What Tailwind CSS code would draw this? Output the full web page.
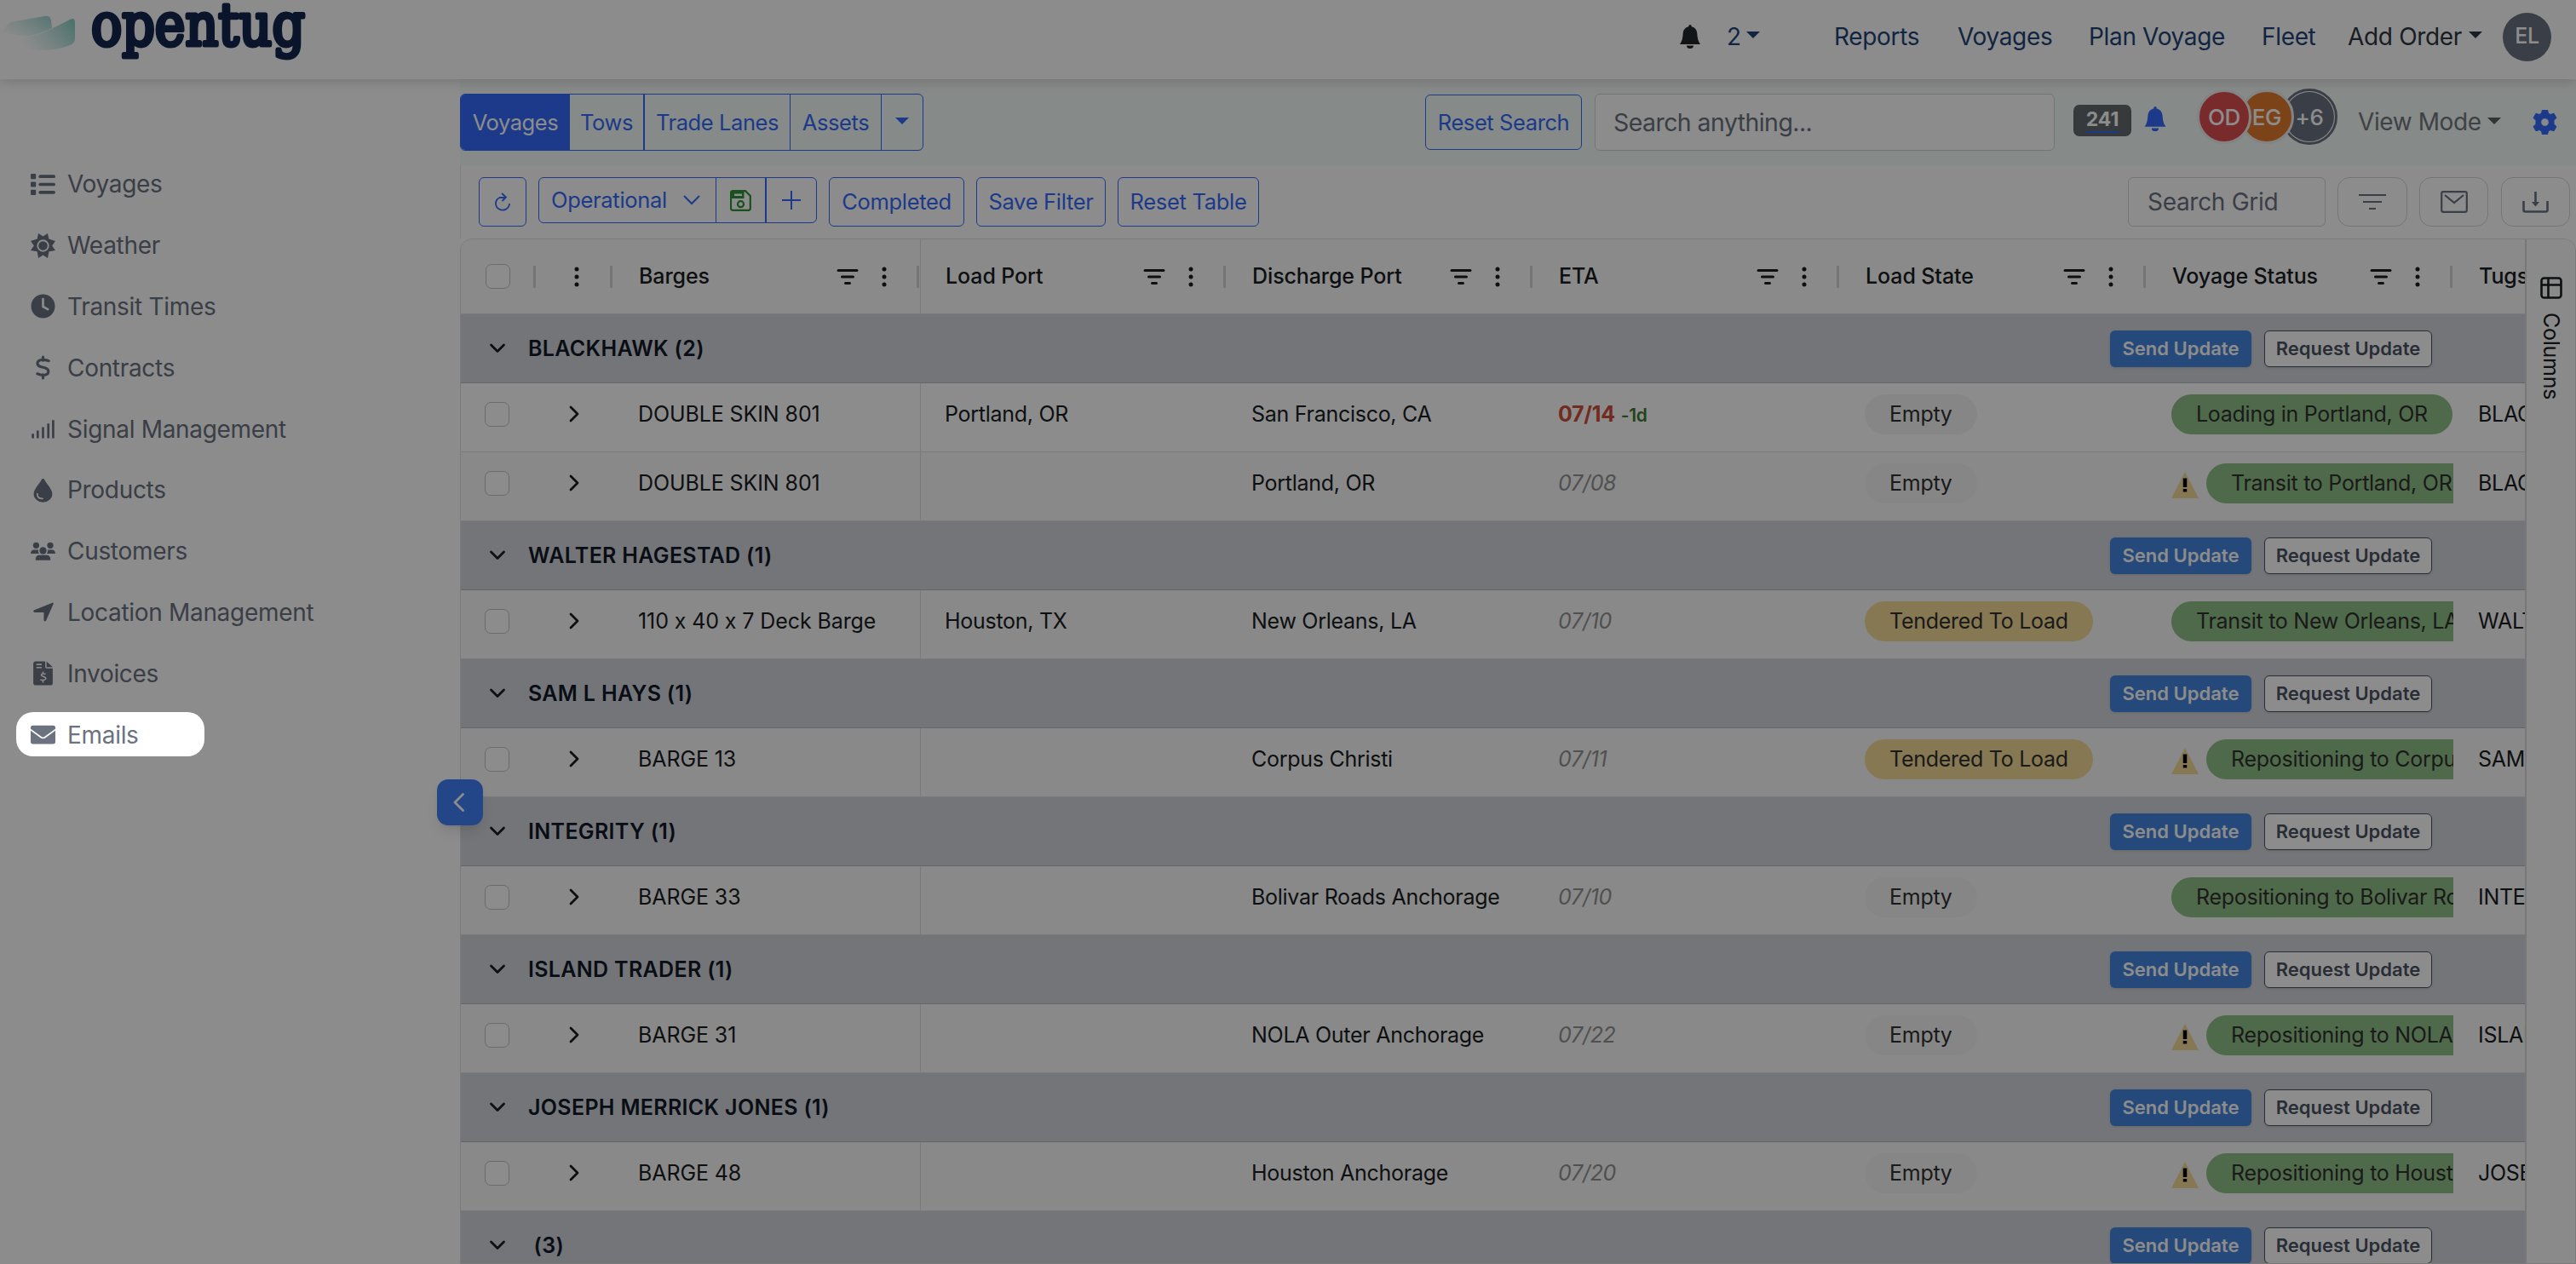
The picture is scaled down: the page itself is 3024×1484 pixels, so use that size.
<!DOCTYPE html>
<html lang="en">
<head>
  <meta charset="UTF-8">
  <meta name="viewport" content="width=device-width, initial-scale=1.0">
  <title>OpenTug - Voyages</title>
  <script src="https://cdn.jsdelivr.net/npm/@tailwindcss/browser@4"></script>
</head>
<body class="relative h-[1484px] w-[3024px] overflow-hidden bg-white font-['Inter','Liberation_Sans',sans-serif] text-[#181d1f] [font-feature-settings:'calt'_0]">

  <!-- icon sprite -->
  <svg class="hidden">
    <symbol id="filter" viewBox="0 0 26 20"><path d="M2 2.500h22M6.500 10h13M10.500 17.500h5" stroke="currentColor" stroke-width="3" stroke-linecap="round"/></symbol>
    <symbol id="dots" viewBox="0 0 6 24"><g fill="currentColor"><circle cx="3" cy="3" r="2.500"/><circle cx="3" cy="12" r="2.500"/><circle cx="3" cy="21" r="2.500"/></g></symbol>
    <symbol id="down" viewBox="0 0 20 12"><path d="M2.500 2l7.500 7.500L17.500 2" fill="none" stroke="currentColor" stroke-width="2.800" stroke-linecap="round" stroke-linejoin="round"/></symbol>
    <symbol id="right" viewBox="0 0 12 20"><path d="M2 2l8 8-8 8" fill="none" stroke="currentColor" stroke-width="2.800" stroke-linecap="round" stroke-linejoin="round"/></symbol>
    <symbol id="caret" viewBox="0 0 16 8"><path d="M0 0h16L8 8z" fill="currentColor"/></symbol>
    <symbol id="bell" viewBox="0 0 24 28"><path d="M12 0a1.700 1.700 0 0 1 1.700 1.700v.6C18 3.200 20 6.500 20.300 10.500c.4 5 .9 8.500 3.700 12.500H0c2.800-4 3.300-7.500 3.700-12.500C4 6.500 6 3.200 10.300 2.300v-.6A1.700 1.700 0 0 1 12 0zM8 24.500h8a4 3.500 0 0 1-8 0z" fill="currentColor"/></symbol>
    <symbol id="warn" viewBox="0 0 32 31"><path d="M16 0l16 31H0z" fill="#f4da95"/><path d="M16 7.500v10.500" stroke="#000" stroke-width="4.500"/><path d="M13.800 20h4.400v3.500h-4.400z" fill="#000"/></symbol>
  </svg>

  <header class="relative z-10 flex h-[93px] items-start bg-white shadow-[0_2px_14px_rgba(0,0,0,0.18)]">
    <svg class="h-[93px] w-[400px] shrink-0" viewBox="0 0 400 93">
      <defs>
        <linearGradient id="wave1" x1="0" x2="1" y1=".6" y2="0"><stop offset="0" stop-color="#b5e3dd" stop-opacity=".15"/><stop offset="1" stop-color="#98d3cb"/></linearGradient>
        <linearGradient id="wave2" x1="0" x2="1" y1=".6" y2=".2"><stop offset="0" stop-color="#b5e3dd" stop-opacity="0"/><stop offset="1" stop-color="#8fd0c7"/></linearGradient>
      </defs>
      <path d="M4 38C6 30 10 26 18 25L52 19Q59 18 60 24L61 33Q44 41 34 42Q14 41 4 38z" fill="url(#wave1)"/>
      <path d="M20 46Q45 42 60 34L82 23Q88 20 88 26V45Q88 51 82 53Q60 62 28 57z" fill="url(#wave2)"/>
      <text x="107" y="53" textLength="251" lengthAdjust="spacingAndGlyphs" font-family="'DejaVu Serif'" font-size="69" fill="#13264f" stroke="#13264f" stroke-width="5" stroke-linejoin="round">opentug</text>
    </svg>
    <nav class="ml-auto flex h-[86px] items-center pr-[29px] text-[28px] tracking-[-0.012em] whitespace-nowrap text-[#1f4478]">
      <svg class="mr-[31px] h-[28px] w-[24px] text-[#212529]"><use href="#bell"/></svg>
      <span class="w-[23px]">2</span>
      <svg class="mr-[87px] -mt-1 h-[8px] w-[16px]"><use href="#caret"/></svg>
      <a class="w-[145px]">Reports</a>
      <a class="w-[154px]">Voyages</a>
      <a class="w-[203px]">Plan Voyage</a>
      <a class="w-[101px]">Fleet</a>
      <a class="w-[142px] text-[#2f3542]">Add Order</a>
      <svg class="mr-[24px] -mt-1 h-[8px] w-[16px] text-[#2f3542]"><use href="#caret"/></svg>
      <span class="flex size-[57px] items-center justify-center rounded-full bg-[#6b7280] text-[25px] font-medium text-white">EL</span>
    </nav>
  </header>

  <div class="flex h-[1391px]">
    <aside class="w-[540px] shrink-0 pt-[87.500px]">
      <ul id="menu" class="text-[28px] tracking-[-0.011em] text-[#6b7280]"></ul>
    </aside>

    <main class="relative flex w-[2484px] flex-col">
      <section class="flex h-[101px] items-start bg-[#f5fbf8] pt-[17px] text-[25.500px] tracking-[-0.016em] whitespace-nowrap text-[#336bfa]">
        <div class="flex h-[67px] w-[544px] overflow-hidden rounded-[6px] border border-[#336bfa] leading-[65px]">
          <div class="w-[128px] bg-[#336bfa] text-center text-white">Voyages</div>
          <div class="w-[88px] border-r-2 border-[#336bfa] text-center">Tows</div>
          <div class="w-[171px] border-r border-[#336bfa] text-center">Trade Lanes</div>
          <div class="w-[107px] border-r border-[#336bfa] text-center">Assets</div>
          <div class="flex flex-1 items-center justify-center"><svg class="-mt-1 h-[8px] w-[16px]"><use href="#caret"/></svg></div>
        </div>
        <div class="mt-px ml-[589px] h-[65px] w-[184px] rounded-[6px] border border-[#336bfa] text-center leading-[63px]">Reset Search</div>
        <div class="ml-[15px] h-[67px] w-[540px] rounded-[6px] border border-[#d1d5db] bg-white pl-[21px] text-[28.500px] leading-[65px] tracking-[-0.02em] text-[#6b7280]">Search anything...</div>
        <div class="mt-[13px] ml-[22px] h-[37px] w-[68px] rounded-[7px] bg-[#646a70] pt-[5px] text-center text-[23px] leading-[25px] font-bold tracking-normal text-white"><span class="border-b-2 border-[#336bfa]">241</span></div>
        <svg class="mt-[15px] ml-[15px] h-[29px] w-[26px]"><use href="#bell"/></svg>
        <div class="-mt-[6px] ml-[36px] flex items-center text-[26px] font-medium text-white">
          <span class="z-20 flex size-[64px] items-center justify-center rounded-full border-3 border-[#f0eeee] bg-[#dc4f4f]">OD</span>
          <span class="z-10 -ml-[14px] flex size-[64px] items-center justify-center rounded-full border-3 border-[#f0eeee] bg-[#e27a2e]">EG</span>
          <span class="-ml-[15px] flex size-[66px] items-center justify-center rounded-full border-3 border-[#6b7280] bg-white"><span class="flex size-[58px] items-center justify-center rounded-full bg-[#6b7280]">+6</span></span>
        </div>
        <div class="ml-[24px] w-[152px] text-[28px] leading-[67px] text-[#74787d]">View Mode</div>
        <svg class="mt-[28px] h-[8px] w-[16px] text-[#5b5f64]"><use href="#caret"/></svg>
        <svg class="mt-[19px] ml-[37px] size-[29px]" viewBox="0 0 29 29"><path d="M11.500 0h6l1 4 2.500 1.500 4-1.300 3 5.200-3 2.900v4.400l3 2.900-3 5.200-4-1.300-2.500 1.500-1 4h-6l-1-4L8 23.500l-4 1.300-3-5.200 3-2.900v-4.400L1 9.400l3-5.200 4 1.300L10.500 4zM14.500 9.700a4.800 4.800 0 1 0 0 9.600 4.800 4.800 0 0 0 0-9.600z" fill="currentColor" fill-rule="evenodd" stroke="currentColor" stroke-linejoin="round"/></svg>
      </section>

      <section class="flex h-[86px] items-start border-l border-[#e5e7eb] pt-[14px] pl-[21px] text-[25.500px] tracking-[-0.012em] whitespace-nowrap text-[#336bfa]">
        <div class="flex h-[58px] w-[56px] items-center justify-center rounded-[6px] border border-[#336bfa]">
          <svg class="h-[22px] w-[18px]" viewBox="0 0 18 22" fill="none" stroke="currentColor" stroke-width="1.800"><path d="M5 6.200A8 7.700 0 1 0 17 13M8 1l5 4.500-4.500 4.500M5 6h8"/></svg>
        </div>
        <div class="ml-[14px] flex h-[54px] w-[327px] items-center rounded-[6px] border border-[#336bfa] leading-[54px]">
          <span class="w-[154px] pl-[14px]">Operational</span>
          <svg class="ml-[15px] h-[12px] w-[20px]" viewBox="0 0 20 12"><path d="M1 1l9 9 9-9" fill="none" stroke="currentColor" stroke-width="2"/></svg>
          <span class="ml-[18px] flex h-full w-[60px] items-center justify-center border-r-2 border-l border-[#336bfa]">
            <svg class="size-[25px] text-[#30903a]" viewBox="0 0 25 25"><path d="M3 1.200h15l5.800 5.800v14.800a2 2 0 0 1-2 2H3a2 2 0 0 1-2-2V3.200a2 2 0 0 1 2-2z" fill="none" stroke="currentColor" stroke-width="2.200"/><path d="M1.500 2h15v8h-15zM5 4.500V7h9V4.500z" fill="currentColor" fill-rule="evenodd"/><circle cx="12.500" cy="16.700" r="3.500" fill="none" stroke="currentColor" stroke-width="2.200"/></svg>
          </span>
          <svg class="ml-[18px] size-[22px]" viewBox="0 0 22 22"><path d="M11 0v22M0 11h22" stroke="currentColor" stroke-width="2"/></svg>
        </div>
        <div class="ml-[14px] h-[58px] w-[159px] rounded-[6px] border border-[#336bfa] text-center leading-[56px]">Completed</div>
        <div class="ml-[14px] h-[58px] w-[152px] rounded-[6px] border border-[#336bfa] text-center leading-[56px]">Save Filter</div>
        <div class="ml-[14px] h-[58px] w-[166px] rounded-[6px] border border-[#336bfa] text-center leading-[56px]">Reset Table</div>
        <div class="ml-auto h-[58px] w-[232px] rounded-[6px] border border-[#d1d5db] pl-[22px] text-[28px] leading-[56px] text-[#6b7280]">Search Grid</div>
        <div class="mr-[7px] flex text-[#6b7280]">
          <span class="ml-[14px] flex h-[58px] w-[82px] items-center justify-center rounded-[14px] border border-[#d1d5db]"><svg class="h-[20px] w-[34px]" viewBox="0 0 34 20"><path d="M1 2h32M6 10h22M13 18h8" stroke="currentColor" stroke-width="2.200"/></svg></span>
          <span class="ml-[14px] flex h-[58px] w-[81px] items-center justify-center rounded-[14px] border border-[#d1d5db]"><svg class="h-[26px] w-[32px]" viewBox="0 0 32 26" fill="none" stroke="currentColor" stroke-width="2.200"><rect x="1.200" y="1.200" width="29.600" height="23.600" rx="2"/><path d="M5 5l11 9 11-9"/></svg></span>
          <span class="ml-[15px] flex h-[58px] w-[81px] items-center justify-center rounded-[14px] border border-[#d1d5db]"><svg class="h-[25px] w-[31px]" viewBox="0 0 31 25" fill="none" stroke="currentColor" stroke-width="2.600"><path d="M1.500 11v10.500a2 2 0 0 0 2 2h24a2 2 0 0 0 2-2V11"/><path d="M15.500 0v15"/><path d="M11 12h9l-4.500 5.500z" fill="currentColor" stroke="none"/></svg></span>
        </div>
      </section>

      <section class="flex h-[1204px] overflow-hidden rounded-t-[14px] border border-[#dfdfdf]">
        <div class="w-[2423px] shrink-0 overflow-hidden text-[25px]">
          <div id="head" class="flex h-[88px] w-[2700px] items-center border-b border-[#dfdfdf] bg-[#fbfbfb] font-[450] tracking-[-0.004em]"></div>
          <div id="rows"></div>
        </div>
        <aside class="flex w-[59px] flex-col items-center border-l-2 border-[#dadada] bg-[#fbfbfb] pt-[44px]">
          <svg class="size-[26px]" viewBox="0 0 26 26" fill="none" stroke="#181d1f" stroke-width="2.600"><rect x="1.500" y="1.500" width="23" height="23" rx="3"/><path d="M1.500 9.500h23M9.500 1.500v23"/></svg>
          <span class="mt-[16px] text-[25px] leading-[28px] tracking-[-0.01em] [writing-mode:vertical-rl]">Columns</span>
        </aside>
      </section>

      <!-- sidebar collapse toggle, straddles the sidebar edge -->
      <button class="absolute top-[822px] left-[-27px] flex size-[54px] items-center justify-center rounded-[13px] bg-[#4080f8] pr-[4px] text-white shadow-lg">
        <svg class="h-[22px] w-[13px]" viewBox="0 0 13 22"><path d="M11.500 1.500L2 11l9.500 9.500" fill="none" stroke="currentColor" stroke-width="2.800" stroke-linecap="round" stroke-linejoin="round"/></svg>
      </button>
    </main>
  </div>

  <!-- tour spotlight -->
  <div class="absolute top-[836px] left-[19px] z-50 h-[52px] w-[221px] rounded-[20px] shadow-[0_0_0_4000px_rgba(0,0,0,0.45)]"></div>

  <script>
    const menu = [
      ['Voyages', '<g fill="currentColor"><rect x="0" y="2" width="6" height="6" rx="1"/><rect x="0" y="11" width="6" height="6" rx="1"/><rect x="0" y="20" width="6" height="6" rx="1"/><rect x="9" y="3.200" width="19" height="3.600" rx="1.800"/><rect x="9" y="12.200" width="19" height="3.600" rx="1.800"/><rect x="9" y="21.200" width="19" height="3.600" rx="1.800"/></g>'],
      ['Weather', '<path d="M8.700 0L14 3.400 19.300 0l1.300 6.200L28 8.700 24.300 14l3.700 5.300-7.200 1.300L19.300 28 14 24.600 8.700 28l-1.300-7.400L0 19.300 3.700 14 0 8.700l7.400-2.500z" fill="currentColor"/><circle cx="14" cy="14" r="6" fill="currentColor" stroke="#fff" stroke-width="1.800"/>'],
      ['Transit Times', '<circle cx="14" cy="14" r="13.500" fill="currentColor"/><path d="M14 6v8.500l5.500 3" fill="none" stroke="#fff" stroke-width="2.600" stroke-linecap="round" stroke-linejoin="round"/>'],
      ['Contracts', '<path d="M14 2v4M14 22v4M20.500 6.500C17 5.200 14.500 4.900 12 5.300c-6 1.200-5.500 6.700 0 8l4 1c5.500 1.500 5.500 7 0 8.200-2.500.4-5 0-8.500-1.500" fill="none" stroke="currentColor" stroke-width="3" stroke-linecap="round"/>'],
      ['Signal Management', '<path d="M2.500 19.500v5M8 16v8.500M14 12v12.500M20 8v16.500M25.500 4v20.500" stroke="currentColor" stroke-width="2.600"/>'],
      ['Products', '<path d="M14 1c1 0 1.400.6 1.800 1.300C18.500 7.200 24.500 13 24.500 18a10.500 9.800 0 0 1-21 0c0-5 6-10.800 8.700-15.700C12.600 1.600 13 1 14 1z" fill="currentColor"/><path d="M7.500 18c0 3.500 2.500 5.500 6 5.600" fill="none" stroke="#fff" stroke-width="1.600" stroke-linecap="round"/>'],
      ['Customers', '<g fill="currentColor"><circle cx="6.200" cy="7" r="3.500"/><circle cx="22.200" cy="7" r="3.500"/><circle cx="14" cy="13" r="4"/><path d="M4 12h4.500c0 2 .3 3.300 1.300 4.500H0c0-2.800 1.500-4.500 4-4.500zM24 12h-4.500c0 2-.3 3.300-1.300 4.500H28c0-2.800-1.500-4.500-4-4.500zM10 18h8c3 0 4.500 2 4.500 5 0 .7-.5 1-1 1h-15c-.5 0-1-.3-1-1 0-3 1.500-5 4.500-5z"/></g>'],
      ['Location Management', '<path d="M24.500 3.500c.9-.3 1.600.4 1.300 1.300L17.500 23.700c-.6 1.400-2.600 1-2.600-.5V14.500H4.500c-1.500 0-2-2-.5-2.600z" fill="currentColor"/>'],
      ['Invoices', '<path d="M6 .5h10.500v6a2 2 0 0 0 2 2h6.500V25a2.500 2.500 0 0 1-2.500 2.500h-16.500A2.500 2.500 0 0 1 3 25V3A2.500 2.500 0 0 1 6 .5zM18 .5l7 6.500h-7z" fill="currentColor"/><path d="M6.500 4h6M6.500 7.500h6M14 12v2M14 22.500v2M17 14.800c-5-1.400-6.500 1.700-3 2.700 5.500 1.200 3.500 5.500-3 3.700" fill="none" stroke="#fff" stroke-width="1.500"/>'],
      ['Emails', '<path d="M0 7.500V6a2.500 2.500 0 0 1 2.500-2.500h23A2.500 2.500 0 0 1 28 6v1.500L15.500 16.500q-1.500 1-3 0zM0 9.500l11.500 8.300q2.500 1.600 5 0L28 9.500V22a2.500 2.500 0 0 1-2.500 2.500h-23A2.500 2.500 0 0 1 0 22z" fill="currentColor"/>'],
    ];
    document.getElementById('menu').innerHTML = menu.map(([label, icon]) => `
      <li class="flex h-[71.800px] items-center pl-[36px]">
        <svg class="mr-[14px] size-[29px]" viewBox="0 0 28 28">${icon}</svg>${label}
      </li>`).join('');

    const sep = '<i class="mr-px h-[26px] w-[3px] bg-[#d6d6d6]"></i>';
    const box = '<i class="size-[29px] rounded-[7px] border border-[#c3c3c3] bg-white"></i>';
    const cols = ['Barges', 'Load Port', 'Discharge Port', 'ETA', 'Load State', 'Voyage Status', 'Tugs'];
    document.getElementById('head').innerHTML = `
      <div class="flex w-[89px] items-center justify-between pl-[29px]">${box}${sep}</div>
      <div class="flex w-[90px] items-center pl-[44px]"><svg class="mr-auto h-[24px] w-[6px]"><use href="#dots"/></svg>${sep}</div>` +
      cols.map((name, i) => `
      <div class="${i === 1 ? 'flex h-full w-[360px] items-center border-l border-[#dfdfdf] pl-[29px]' : 'flex h-full w-[360px] items-center pl-[30px]'}">
        <span class="mt-px mr-auto whitespace-nowrap">${name}</span>
        <svg class="h-[20px] w-[26px]"><use href="#filter"/></svg>
        <svg class="ml-[27px] mr-[35.500px] h-[24px] w-[6px]"><use href="#dots"/></svg>${sep}
      </div>`).join('');

    // [barge, load port, discharge port, eta, load state, warning, voyage status, tug]
    const groups = [
      ['BLACKHAWK (2)', [
        ['DOUBLE SKIN 801', 'Portland, OR', 'San Francisco, CA', '07/14', 'Empty', false, 'Loading in Portland, OR', 'BLACKHAWK'],
        ['DOUBLE SKIN 801', '', 'Portland, OR', '07/08', 'Empty', true, 'Transit to Portland, OR', 'BLACKHAWK'],
      ]],
      ['WALTER HAGESTAD (1)', [['110 x 40 x 7 Deck Barge', 'Houston, TX', 'New Orleans, LA', '07/10', 'Tendered To Load', false, 'Transit to New Orleans, LA', 'WALTER']]],
      ['SAM L HAYS (1)', [['BARGE 13', '', 'Corpus Christi', '07/11', 'Tendered To Load', true, 'Repositioning to Corpus Christi', 'SAM L']]],
      ['INTEGRITY (1)', [['BARGE 33', '', 'Bolivar Roads Anchorage', '07/10', 'Empty', false, 'Repositioning to Bolivar Roads', 'INTEGRITY']]],
      ['ISLAND TRADER (1)', [['BARGE 31', '', 'NOLA Outer Anchorage', '07/22', 'Empty', true, 'Repositioning to NOLA Outer', 'ISLAND']]],
      ['JOSEPH MERRICK JONES (1)', [['BARGE 48', '', 'Houston Anchorage', '07/20', 'Empty', true, 'Repositioning to Houston', 'JOSEPH']]],
      ['&nbsp;(3)', []],
    ];

    const eta = d => d === '07/14'
      ? '<b class="font-bold text-[#d0503a]">07/14</b> <span class="text-[21px] font-semibold text-[#3f7d33]">-1d</span>'
      : `<i class="text-[#939393]">${d}</i>`;
    const pill = s => s === 'Empty'
      ? '<span class="rounded-full bg-[#f5f5f5] px-[29px] leading-[47px] text-[#303030]">Empty</span>'
      : `<span class="rounded-full bg-[#f4da95] px-[29px] leading-[47px] text-[#303030]">${s}</span>`;

    const group = name => `
      <div class="flex h-[81px] items-center border-b border-[#b6b8c2] bg-[#d1d5db] pl-[33px] font-semibold text-[#111827]">
        <svg class="mr-[26px] h-[12px] w-[20px] text-[#181d1f]"><use href="#down"/></svg>
        <span class="w-[1857px] pt-px tracking-[0.013em]">${name}</span>
        <span class="h-[43px] w-[166px] rounded-[6px] bg-[#4486de] text-center text-[22px] leading-[42px] text-white shadow-sm">Send Update</span>
        <span class="ml-[15px] h-[43px] w-[197px] rounded-[6px] border border-[#4b5563] bg-white text-center text-[22px] leading-[41px] text-[#4b5563] shadow-sm">Request Update</span>
      </div>`;
    const row = (r, bg) => `
      <div class="flex h-[81px] w-[2700px] items-center border-b border-[#dfdfdf] tracking-[-0.011em] whitespace-nowrap ${bg}">
        <div class="-mt-[8px] w-[89px] pl-[28px] flex">${box}</div>
        <div class="-mt-[8px] w-[90px] pl-[38px]"><svg class="h-[20px] w-[12px]"><use href="#right"/></svg></div>
        <div class="-mt-[7px] w-[360px] pl-[29px] tracking-[-0.004em]">${r[0]}</div>
        <div class="flex h-full w-[360px] items-center border-l border-[#dfdfdf] pb-[7px] pl-[28px]">${r[1]}</div>
        <div class="-mt-[7px] w-[360px] pl-[29px]">${r[2]}</div>
        <div class="-mt-[7px] w-[360px] pl-[29px]">${eta(r[3])}</div>
        <div class="-mt-[8px] flex w-[360px] pl-[29px]">${pill(r[4])}</div>
        <div class="-mt-[8px] flex w-[360px] items-center overflow-hidden pl-[29px]">
          ${r[5] ? '<svg class="mt-[4px] mr-[9px] h-[31px] w-[32px] shrink-0"><use href="#warn"/></svg>' : ''}
          <span class="shrink-0 rounded-full bg-[#90c187] px-[29px] leading-[47px] text-[#303030]">${r[6]}</span>
        </div>
        <div class="-mt-[7px] pl-[29px]">${r[7]}</div>
      </div>`;

    let n = 0;
    document.getElementById('rows').innerHTML = groups.map(([name, items]) => {
      n++;
      return group(name) + items.map(r => row(r, n++ % 2 ? 'bg-white' : 'bg-[#f9f9f9]')).join('');
    }).join('');
  </script>
</body>
</html>
